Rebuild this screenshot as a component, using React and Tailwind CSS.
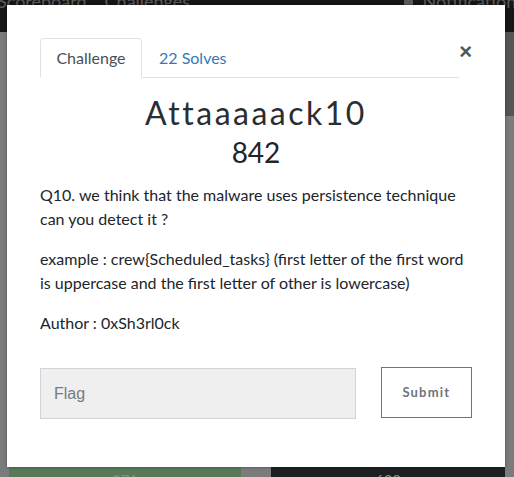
export default function App() {
  return (
    <div className="relative w-[514px] h-[477px] overflow-hidden bg-[#7b7b7b]" style={{ fontFamily: 'Lato, sans-serif' }}>
      {/* page behind the modal */}
      <div className="h-[32px] bg-[#161616] flex items-start justify-between text-[#5c5c5c] text-[18px] leading-none">
        <div className="flex gap-[18px] -ml-[3px] -mt-[8px]">
          <span>Scoreboard</span>
          <span>Challenges</span>
        </div>
        <div className="flex items-start gap-[10px] -mt-[8px] -mr-[10px]">
          <span className="mt-[8px] w-[9px] h-[6px] bg-[#5c5c5c] rounded-[1px]"></span>
          <span>Notifications</span>
        </div>
      </div>
      <div className="flex justify-end">
        <div className="w-[9px] h-[84px] bg-[#555]"></div>
      </div>
      <div className="mt-[351px] flex pl-[9px] gap-[30px] h-[20px] text-[15px] text-[#8a8a8a]">
        <div className="w-[232px] bg-[#587a58] flex justify-center pt-[2px]">271</div>
        <div className="w-[234px] bg-[#1d2023] flex justify-center pt-[2px]">632</div>
      </div>

      {/* modal */}
      <div className="absolute left-[7px] top-[5px] w-[498px] h-[462px] bg-white shadow-[0_0_3px_rgba(0,0,0,0.4)] px-[33px] pt-[33px]">
        <button className="absolute right-[33px] top-[36px] text-[22px] font-bold text-[#555] leading-none" style={{ fontFamily: 'Arial, "Liberation Sans", sans-serif' }}>×</button>
        <div className="w-[419px] flex border-b border-[#dee2e6] h-[40px]">
          <div className="w-[102px] h-[40px] border border-[#dee2e6] border-b-white rounded-t-[4px] bg-white flex items-center justify-center text-[16px] text-[#495057] -mb-px">
            Challenge
          </div>
          <div className="ml-[17px] h-[39px] flex items-center text-[16px] text-[#337ab7]">22 Solves</div>
        </div>
        <div className="text-center text-[#212529]">
          <h2 className="mt-[15px] text-[32px] leading-[40px] tracking-[2.5px] font-normal text-[#2a2d31]">Attaaaaack10</h2>
          <h4 className="mt-[1px] text-[28px] leading-[37px]">842</h4>
        </div>
        <div className="mt-[12px] text-[16px] leading-[24px] text-[#212529]">
          <p>Q10. we think that the malware uses persistence technique can you detect it ?</p>
          <p className="mt-[16px]">example : crew{'{'}Scheduled_tasks{'}'} (first letter of the first word is uppercase and the first letter of other is lowercase)</p>
          <p className="mt-[16px]">Author : 0xSh3rl0ck</p>
        </div>
        <div className="mt-[33px] flex items-start">
          <input
            placeholder="Flag"
            className="w-[318px] h-[51px] bg-[#efefef] border border-[#ced4da] px-[13px] text-[16px] placeholder:text-[#757b81] outline-none"
            style={{ fontFamily: 'Arial, "Liberation Sans", sans-serif' }}
          />
          <button className="ml-[25px] w-[92px] h-[51px] -mt-px border border-[#6c757d] text-[13px] font-bold tracking-[1.2px] text-[#6c757d] bg-white">
            Submit
          </button>
        </div>
      </div>
    </div>
  );
}
